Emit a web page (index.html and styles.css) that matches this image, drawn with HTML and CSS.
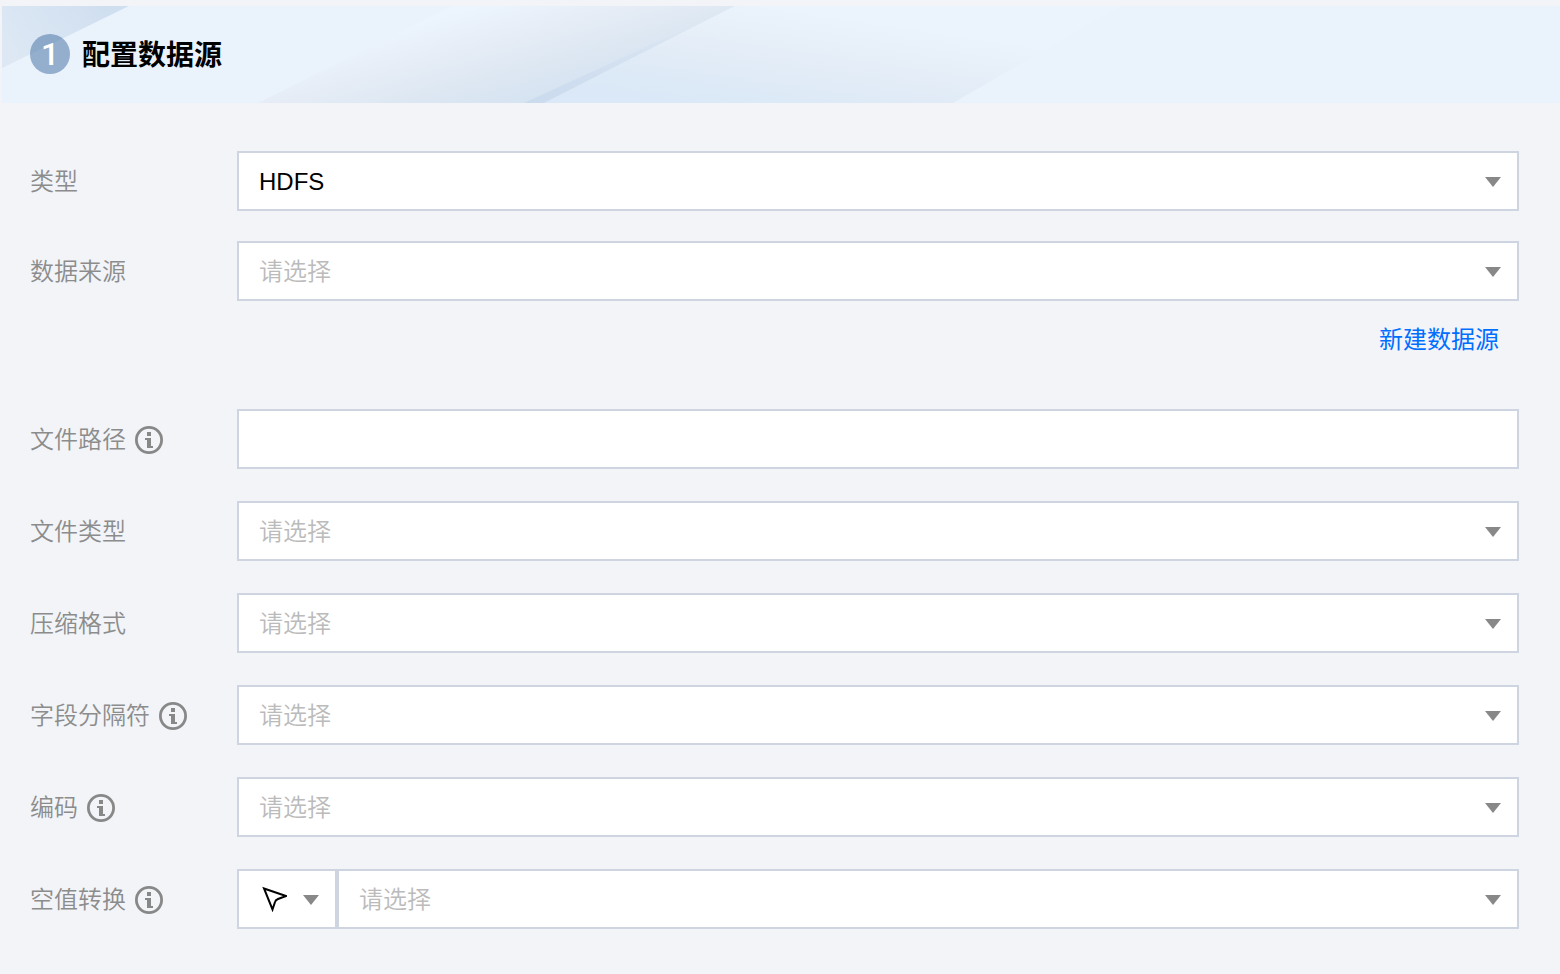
FILE: index.html
```html
<!DOCTYPE html>
<html lang="zh-CN">
    <head>
        <meta charset="utf-8">
        <meta name="viewport" content="width=device-width, initial-scale=1.0">
        <title>配置数据源</title>
        <link rel="stylesheet" href="styles.css">
    </head>
    <body>
        <svg class="defs" width="0" height="0" aria-hidden="true">
            <symbol id="info" viewBox="0 0 28 28">
                <circle cx="14" cy="14" r="12.6" fill="none" stroke="#888" stroke-width="2.8"/>
                <path d="M12 6h4v4h-4zM10 12h6v8h2v2h-6v-8h-2z" fill="#888"/>
            </symbol>
        </svg>
        <header class="banner">
            <svg class="banner-bg" width="1558" height="97" viewBox="0 0 1558 97" aria-hidden="true">
                <defs>
                    <linearGradient id="g1" gradientUnits="userSpaceOnUse" x1="100" y1="0" x2="20" y2="60">
                        <stop offset="0" stop-color="#d0dff0"/>
                        <stop offset="1" stop-color="#dde8f4"/>
                    </linearGradient>
                    <linearGradient id="g2" gradientUnits="userSpaceOnUse" x1="398" y1="21" x2="425" y2="122">
                        <stop offset="0" stop-color="#ecf4fd"/>
                        <stop offset=".4" stop-color="#e5ecf6"/>
                        <stop offset=".65" stop-color="#dee8f3"/>
                        <stop offset="1" stop-color="#d6e3f1"/>
                    </linearGradient>
                    <linearGradient id="g3" gradientUnits="userSpaceOnUse" x1="798" y1="4" x2="782" y2="112">
                        <stop offset="0" stop-color="#ebf3fd"/>
                        <stop offset=".35" stop-color="#e6eef8"/>
                        <stop offset=".85" stop-color="#dce9f6"/>
                        <stop offset="1" stop-color="#dbe8f7"/>
                    </linearGradient>
                    <linearGradient id="g4" gradientUnits="userSpaceOnUse" x1="530" y1="97" x2="690" y2="20">
                        <stop offset="0" stop-color="#cbdbee"/>
                        <stop offset="1" stop-color="#cbdbee" stop-opacity="0"/>
                    </linearGradient>
                </defs>
                <path d="M0 0h127L0 62z" fill="url(#g1)"/>
                <path d="M256 97L450 0h283L542 97z" fill="url(#g2)"/>
                <path d="M542 97L733 0h385L951 97z" fill="url(#g3)"/>
                <path d="M522 97L722 5h1L542 97z" fill="url(#g4)"/>
            </svg>
            <span class="step">1</span>
            <h1 class="title">配置数据源</h1>
        </header>
        <form class="form">
            <div class="row">
                <label class="label" for="type">类型</label>
                <select class="field filled" id="type">
                    <option>HDFS</option>
                </select>
            </div>
            <div class="row">
                <label class="label" for="source">数据来源</label>
                <select class="field" id="source">
                    <option>请选择</option>
                </select>
            </div>
            <a class="link" href="#">新建数据源</a>
            <div class="rows">
                <div class="row">
                    <label class="label" for="path">文件路径 <svg class="info"><use href="#info"/></svg></label>
                    <input class="field text" id="path" type="text">
                </div>
                <div class="row">
                    <label class="label" for="filetype">文件类型</label>
                    <select class="field" id="filetype">
                        <option>请选择</option>
                    </select>
                </div>
                <div class="row">
                    <label class="label" for="compress">压缩格式</label>
                    <select class="field" id="compress">
                        <option>请选择</option>
                    </select>
                </div>
                <div class="row">
                    <label class="label" for="separator">字段分隔符 <svg class="info"><use href="#info"/></svg></label>
                    <select class="field" id="separator">
                        <option>请选择</option>
                    </select>
                </div>
                <div class="row">
                    <label class="label" for="encoding">编码 <svg class="info"><use href="#info"/></svg></label>
                    <select class="field" id="encoding">
                        <option>请选择</option>
                    </select>
                </div>
                <div class="row">
                    <label class="label" for="nullvalue">空值转换 <svg class="info"><use href="#info"/></svg></label>
                    <button class="mode" type="button" aria-label="选择方式">
                        <svg width="26" height="26" viewBox="0 0 26 26"><path d="M3 2.5L25 10L17 13Q14.5 14 14 16L11.5 23.5z" fill="none" stroke="#000" stroke-width="2"/></svg>
                        <svg width="16" height="12" viewBox="0 0 16 12"><path d="M0 2h16L8 12z" fill="#888"/></svg>
                    </button>
                    <select class="field" id="nullvalue">
                        <option>请选择</option>
                    </select>
                </div>
            </div>
        </form>
    </body>
</html>
```
FILE: styles.css
```css
* {
    box-sizing: border-box;
}
body {
    margin: 0;
    padding: 6px 0 0 2px;
    background-color: #f2f4f8;
    font-family: "Liberation Sans", "Noto Sans CJK SC", sans-serif;
    font-size: 24px;
    font-weight: 350;
}
.defs {
    position: absolute;
}
.banner {
    position: relative;
    overflow: hidden;
    display: flex;
    align-items: center;
    gap: 12px;
    height: 97px;
    padding: 0 0 1px 28px;
    background-color: #eaf2fc;
}
.banner-bg {
    position: absolute;
    top: 0;
    left: 0;
}
.step {
    position: relative;
    width: 40px;
    height: 40px;
    border-radius: 50%;
    background-color: rgba(62, 107, 158, 0.5);
    color: white;
    font-family: Roboto, sans-serif;
    font-size: 32px;
    font-weight: 500;
    line-height: 40px;
    text-align: center;
}
.title {
    position: relative;
    margin: 0;
    color: black;
    font-size: 28px;
    font-weight: bold;
    line-height: 44px;
    padding-top: 3px;
}
.form {
    display: flex;
    flex-direction: column;
    padding: 48px 41px 45px 28px;
    gap: 30px;
}
.row {
    display: flex;
    align-items: center;
}
.rows {
    display: flex;
    flex-direction: column;
    gap: 32px;
    margin-top: 20px;
}
.label {
    display: flex;
    align-items: center;
    gap: 9px;
    flex: 0 0 207px;
    padding-top: 2px;
    color: #8c8c8c;
    line-height: 30px;
}
.info {
    width: 28px;
    height: 28px;
}
.field {
    appearance: none;
    flex: 1;
    min-width: 0;
    height: 60px;
    margin: 0;
    padding: 0 40px 0 20px;
    border: 2px solid #cfd5e0;
    border-radius: 0;
    background: white url("data:image/svg+xml,%3Csvg xmlns='http://www.w3.org/2000/svg' width='16' height='12'%3E%3Cpath d='M0 2h16L8 12z' fill='%23888'/%3E%3C/svg%3E") no-repeat right 16px center;
    color: #bbb;
    font: inherit;
}
.filled {
    color: black;
}
.text {
    background-image: none;
    color: black;
}
.mode {
    display: flex;
    align-items: center;
    justify-content: space-between;
    width: 100px;
    height: 60px;
    padding: 0 16px 0 22px;
    border: 2px solid #cfd5e0;
    background-color: white;
}
.link {
    align-self: flex-end;
    margin: -10px 20px 0 0;
    color: #006eff;
    font-weight: 400;
    line-height: 38px;
    text-decoration: none;
}
.field:focus,
.mode:hover {
    border-color: #006eff;
    outline: none;
}
```
